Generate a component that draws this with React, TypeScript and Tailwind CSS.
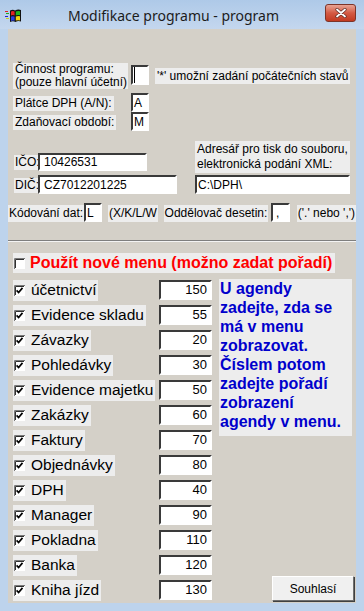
import React from 'react'

const items: [string, number][] = [
  ['účetnictví', 150],
  ['Evidence skladu', 55],
  ['Závazky', 20],
  ['Pohledávky', 30],
  ['Evidence majetku', 50],
  ['Zakázky', 60],
  ['Faktury', 70],
  ['Objednávky', 80],
  ['DPH', 40],
  ['Manager', 90],
  ['Pokladna', 110],
  ['Banka', 120],
  ['Kniha jízd', 130],
]

const Check = ({ checked }: { checked: boolean }) => (
  <svg width="11" height="11" viewBox="0 0 11 11" className="shrink-0">
    <rect x="0" y="0" width="11" height="11" fill="#fff" />
    <path d="M0.5 11V0.5H11" stroke="#7a7a7a" fill="none" />
    <path d="M1.5 10V1.5H10" stroke="#303030" fill="none" />
    {checked && <path d="M2.6 5.4l2 2.1 3.9-4.6" stroke="#000" strokeWidth="1.7" fill="none" />}
  </svg>
)

const Field = ({ value = '', className = '', caret = false }: { value?: string; className?: string; caret?: boolean }) => (
  <div
    className={`bg-white border-2 border-t-[#3a3a3a] border-l-[#3a3a3a] border-r-white border-b-white flex items-center overflow-hidden whitespace-nowrap ${className}`}
  >
    {caret && <span className="w-px h-full bg-black" />}
    {value}
  </div>
)

const WinIcon = () => (
  <svg width="17" height="14" viewBox="0 0 17 14">
    <rect x="0" y="2" width="3" height="1" fill="#d22" />
    <rect x="1" y="4" width="3" height="1" fill="#2a2" />
    <rect x="0" y="7" width="3" height="1" fill="#22c" />
    <rect x="1" y="9" width="3" height="1" fill="#cc2" />
    <path d="M5 1.5Q8 0 10 1.5Q13 0 16 1V12.5Q13 11.5 10.5 13Q8 11.5 5 13Z" fill="#111" />
    <path d="M6 2.4Q7.8 1.5 9.6 2.4V6.5Q7.8 5.7 6 6.6Z" fill="#e32222" />
    <path d="M10.8 2.4Q13 1.5 15 2.2V6.3Q13 5.7 10.8 6.4Z" fill="#1fb51f" />
    <path d="M6 7.6Q7.8 6.8 9.6 7.6V11.8Q7.8 11 6 11.9Z" fill="#2a3fe0" />
    <path d="M10.8 7.5Q13 6.8 15 7.3V11.4Q13 10.8 10.8 11.6Z" fill="#f2d20f" />
  </svg>
)

const App = (): JSX.Element => {
  return (
    <div className="w-[364px] h-[611px] bg-[#bdd3ec] flex flex-col [font-family:'Liberation_Sans',Arial,sans-serif] select-none">
      {/* Title bar */}
      <div className="h-[29px] flex items-center bg-gradient-to-b from-[#aec9e8] to-[#c4d7ee]">
        <div className="ml-[5px] mt-[2px]">
          <WinIcon />
        </div>
        <div className="flex-1 text-center text-[14px] text-[#1c1c1c] [font-family:'Noto_Sans',sans-serif] mt-[1px]">
          Modifikace programu - program
        </div>
        <div className="mr-[8px] mb-[3px] w-[31px] h-[18px] rounded-[3px] border border-[#7d3428] bg-gradient-to-b from-[#e7a394] via-[#d45a43] to-[#c2391f] flex items-center justify-center">
          <svg width="12" height="10" viewBox="0 0 12 10">
            <path d="M2 1.5L10 8.5M10 1.5L2 8.5" stroke="#5b2a22" strokeWidth="3.2" strokeLinecap="round" />
            <path d="M2 1.5L10 8.5M10 1.5L2 8.5" stroke="#fff" strokeWidth="1.8" strokeLinecap="round" />
          </svg>
        </div>
      </div>

      {/* Client area */}
      <div className="mx-[8px] w-[348px] h-[574px] bg-[#d4d0c8] flex flex-col text-[12px] text-black overflow-hidden">
        {/* Činnost */}
        <div className="mt-[34px] flex items-start">
          <div className="ml-[5px] w-[115px] h-[26px] bg-[#ededed] px-[2px] leading-[13px] whitespace-nowrap">
            Činnost programu:
            <br />
            (pouze hlavní účetní)
          </div>
          <Field className="ml-[3px] mt-[2px] w-[18px] h-[20px] pl-px" caret />
          <div className="ml-[6px] mt-[5px] w-[195px] h-[16px] bg-[#ededed] px-[2px] leading-[16px] whitespace-nowrap">
            '*' umožní zadání počátečních stavů
          </div>
        </div>

        {/* Plátce DPH */}
        <div className="mt-[4px] h-[19px] flex items-center">
          <div className="w-[123px] pl-[5px]">
            <span className="bg-[#ededed] px-[2px] inline-block h-[15px] leading-[15px]">Plátce DPH (A/N):</span>
          </div>
          <Field value="A" className="w-[18px] h-[19px] pl-[1px]" />
        </div>

        {/* Zdaňovací období */}
        <div className="h-[19px] flex items-center">
          <div className="w-[123px] pl-[5px]">
            <span className="bg-[#ededed] px-[2px] inline-block h-[15px] leading-[15px]">Zdaňovací období:</span>
          </div>
          <Field value="M" className="w-[18px] h-[19px] pl-[1px]" />
        </div>

        {/* IČO / DIČ / adresář */}
        <div className="mt-[10px] flex items-start">
          <div className="w-[187px] pt-[12px] flex flex-col">
            <div className="h-[18px] flex items-center">
              <div className="w-[30px] pl-[6px]">
                <span className="bg-[#ededed] px-px inline-block h-[15px] leading-[15px]">IČO:</span>
              </div>
              <Field value="10426531" className="w-[109px] h-[18px] pl-[4px]" />
            </div>
            <div className="mt-[4px] h-[19px] flex items-center">
              <div className="w-[30px] pl-[6px]">
                <span className="bg-[#ededed] px-px inline-block h-[15px] leading-[15px]">DIČ:</span>
              </div>
              <Field value="CZ7012201225" className="w-[139px] h-[19px] pl-[4px]" />
            </div>
          </div>
          <div className="flex flex-col">
            <div className="w-[155px] h-[32px] bg-[#ededed] px-[2px] pt-px leading-[15px] whitespace-nowrap">
              Adresář pro tisk do souboru,
              <br />
              elektronická podání XML:
            </div>
            <Field value="C:\DPH\" className="mt-[2px] w-[155px] h-[19px] pl-px" />
          </div>
        </div>

        {/* Kódování / oddělovač */}
        <div className="mt-[9px] h-[19px] flex items-center whitespace-nowrap">
          <div className="w-[76px]">
            <span className="bg-[#ededed] px-px inline-block h-[17px] leading-[17px]">Kódování dat:</span>
          </div>
          <Field value="L" className="w-[18px] h-[19px] pl-px" />
          <div className="ml-[6px] w-[52px]">
            <span className="bg-[#ededed] px-px inline-block h-[17px] leading-[17px]">(X/K/L/W</span>
          </div>
          <div className="ml-[4px] w-[108px]">
            <span className="bg-[#ededed] px-px inline-block h-[17px] leading-[17px]">Oddělovač desetin:</span>
          </div>
          <Field value="," className="w-[19px] h-[19px] pl-[3px]" />
          <div className="ml-[7px]">
            <span className="bg-[#ededed] px-px inline-block h-[17px] leading-[17px]">('.' nebo ',')</span>
          </div>
        </div>

        {/* Separator */}
        <div className="mt-[18px] h-[2px] border-t border-t-[#7f7f7f] border-b border-b-[#f4f4f4]" />

        {/* Nové menu */}
        <div className="mt-[11px] h-[20px] flex items-center">
          <div className="ml-[5px] h-[20px] inline-flex items-center bg-[#ededed] pl-px pr-[3px]">
            <Check checked={false} />
            <span className="ml-[5px] text-[16px] font-bold text-[#f00] whitespace-nowrap">
              Použít nové menu (možno zadat pořadí)
            </span>
          </div>
        </div>

        {/* Agendy */}
        <div className="mt-[7px] flex items-start">
          <div className="flex flex-col gap-[5px]">
            {items.map(([name, order]) => (
              <div key={name} className="h-[20px] flex items-center">
                <div className="w-[151px]">
                  <div className="ml-[5px] h-[21px] inline-flex items-center bg-[#ededed] pl-px pr-[2px]">
                    <Check checked />
                    <span className="ml-[6px] text-[15.5px] whitespace-nowrap">{name}</span>
                  </div>
                </div>
                <Field value={String(order)} className="w-[53px] h-[20px] justify-end pr-[3px] text-[13px]" />
              </div>
            ))}
          </div>
          <div className="ml-[7px] mt-[-1px] w-[137px] h-[322px] flex flex-col">
            <div className="w-[133px] h-[157px] bg-[#ededed] pl-px text-[16px] leading-[19px] font-bold text-[#0000cc]">
              U agendy zadejte, zda se má v menu zobrazovat. Číslem potom zadejte pořadí zobrazení agendy v menu.
            </div>
            <button className="mt-auto self-end mr-[2px] w-[82px] h-[25px] bg-[#f0f0f0] border border-t-white border-l-white border-r-[#6e6e6e] border-b-[#6e6e6e] shadow-[1px_1px_0_#404040] text-[12px] text-black">
              Souhlasí
            </button>
          </div>
        </div>
      </div>
    </div>
  )
}

export default App
